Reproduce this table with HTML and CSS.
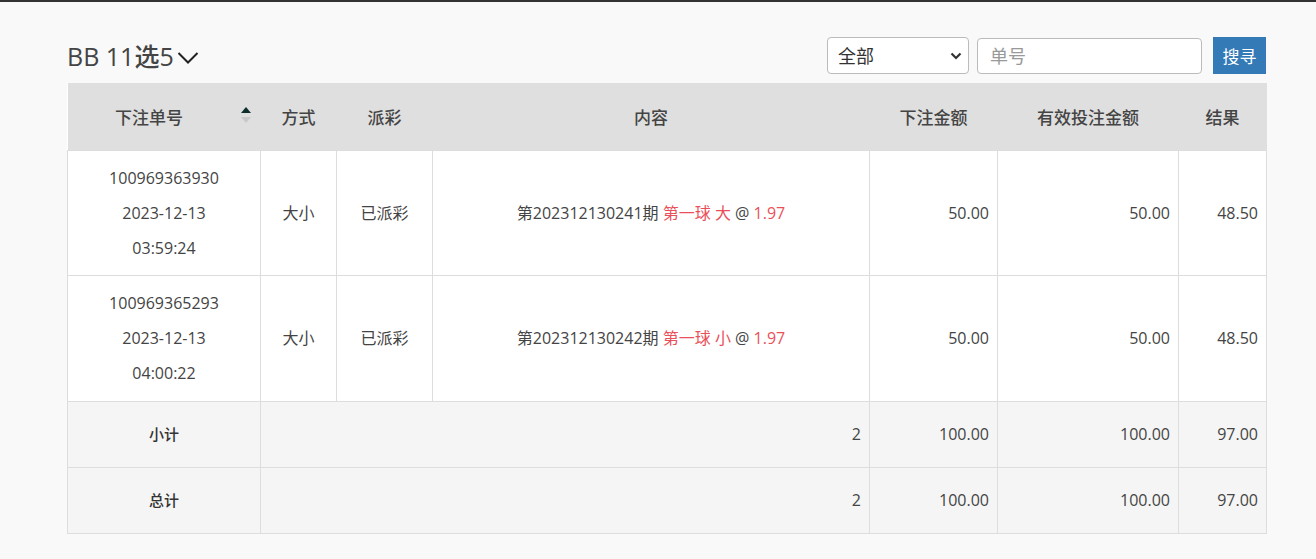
FILE: index.html
```html
<!DOCTYPE html>
<html lang="zh-CN">
<head>
<meta charset="utf-8">
<title>BB 11选5</title>
<link rel="stylesheet" href="styles.css">
</head>
<body>
<div class="page">
  <div class="toolbar">
    <h1 class="title">BB 11选5<svg class="title-caret" width="22" height="14" viewBox="0 0 22 14"><path d="M1.5 2 L11 11.5 L20.5 2" fill="none" stroke="#222" stroke-width="2"/></svg></h1>
    <form class="filters">
      <select class="filter-select"><option>全部</option></select>
      <input class="filter-input" type="text" placeholder="单号">
      <button class="filter-btn" type="button">搜寻</button>
    </form>
  </div>
  <table class="bets">
    <colgroup>
      <col class="c1"><col class="c2"><col class="c3"><col class="c4"><col class="c5"><col class="c6"><col class="c7">
    </colgroup>
    <thead>
      <tr>
        <th class="sortable">下注单号<span class="sort"><svg width="12" height="20" viewBox="0 0 12 20"><path d="M1 7 L6 1 L11 7 Z" fill="#0d2e2a"/><path d="M1 11 L6 17 L11 11 Z" fill="#c8c8c8"/></svg></span></th>
        <th>方式</th>
        <th>派彩</th>
        <th>内容</th>
        <th>下注金额</th>
        <th>有效投注金额</th>
        <th>结果</th>
      </tr>
    </thead>
    <tbody>
      <tr>
        <td class="center">100969363930<br>2023-12-13<br>03:59:24</td>
        <td class="center">大小</td>
        <td class="center">已派彩</td>
        <td class="center">第202312130241期 <span class="hl">第一球 大</span> @ <span class="hl">1.97</span></td>
        <td class="num">50.00</td>
        <td class="num">50.00</td>
        <td class="num">48.50</td>
      </tr>
      <tr>
        <td class="center">100969365293<br>2023-12-13<br>04:00:22</td>
        <td class="center">大小</td>
        <td class="center">已派彩</td>
        <td class="center">第202312130242期 <span class="hl">第一球 小</span> @ <span class="hl">1.97</span></td>
        <td class="num">50.00</td>
        <td class="num">50.00</td>
        <td class="num">48.50</td>
      </tr>
      <tr class="sum">
        <td class="center label">小计</td>
        <td class="num" colspan="3">2</td>
        <td class="num">100.00</td>
        <td class="num">100.00</td>
        <td class="num">97.00</td>
      </tr>
      <tr class="sum">
        <td class="center label">总计</td>
        <td class="num" colspan="3">2</td>
        <td class="num">100.00</td>
        <td class="num">100.00</td>
        <td class="num">97.00</td>
      </tr>
    </tbody>
  </table>
</div>
</body>
</html>
```

FILE: styles.css
```css
* { box-sizing: border-box; }

html, body {
  margin: 0;
  padding: 0;
}

body {
  background: #f9f9f9;
  border-top: 2px solid #333;
  font-family: "Open Sans", "Noto Sans CJK SC", sans-serif;
  color: #444;
  font-size: 16px;
}

.page {
  padding: 35px 50px 0 67px;
}

.toolbar {
  display: flex;
  align-items: center;
  justify-content: space-between;
  height: 37px;
  margin-bottom: 9px;
}

.title {
  margin: 0;
  font-size: 25px;
  font-weight: 500;
  color: #444;
  display: flex;
  align-items: center;
  line-height: 37px;
  padding-top: 2px;
}

.title-caret {
  margin-left: 3px;
  margin-top: 2px;
}

.filters {
  display: flex;
  align-items: center;
  margin: 0;
}

.filter-select {
  width: 142px;
  height: 37px;
  border: 1px solid #bbb;
  border-radius: 4px;
  background: #fff url("data:image/svg+xml;utf8,<svg xmlns='http://www.w3.org/2000/svg' width='12' height='8' viewBox='0 0 12 8'><path d='M1.5 1.5 L6 6 L10.5 1.5' fill='none' stroke='%23333' stroke-width='2.2'/></svg>") no-repeat right 6px center;
  -webkit-appearance: none;
  appearance: none;
  font-family: "Open Sans", "Noto Sans CJK SC", sans-serif;
  font-size: 18px;
  color: #333;
  padding: 0 10px;
}

.filter-input {
  margin-left: 8px;
  width: 225px;
  height: 36px;
  border: 1px solid #bbb;
  border-radius: 4px;
  background: #fff;
  font-family: "Open Sans", "Noto Sans CJK SC", sans-serif;
  font-size: 18px;
  padding: 0 12px;
  color: #333;
}

.filter-input::placeholder {
  color: #999;
}

.filter-btn {
  margin-left: 11px;
  width: 53px;
  height: 37px;
  border: 0;
  background: #337ab7;
  color: #fff;
  font-family: "Open Sans", "Noto Sans CJK SC", sans-serif;
  font-size: 17px;
  padding: 0;
}

.bets {
  width: 1199px;
  border-collapse: collapse;
  table-layout: fixed;
  background: #fff;
}

.c1 { width: 193px; }
.c2 { width: 76px; }
.c3 { width: 96px; }
.c4 { width: 437px; }
.c5 { width: 128px; }
.c6 { width: 181px; }
.c7 { width: 88px; }

.bets th {
  background: #dfdfdf;
  font-size: 17px;
  font-weight: 500;
  color: #444;
  height: 67px;
  padding: 0 8px;
  text-align: center;
  vertical-align: middle;
}

.bets th.sortable {
  position: relative;
  padding-right: 38px;
}

.sort {
  position: absolute;
  right: 9px;
  top: 23px;
  display: block;
  line-height: 0;
}

.bets td {
  border: 1px solid #ddd;
  padding: 10px 8px 9.5px;
  line-height: 35px;
  vertical-align: middle;
  font-size: 16px;
  color: #444;
}

.bets td.center { text-align: center; }
.bets td.num { text-align: right; }

.hl { color: #e9505a; }

.sum td {
  background: #f5f5f5;
  height: 66px;
  padding: 0 8px;
}

.sum td.label {
  font-size: 15px;
  font-weight: 500;
  color: #333;
}
```
